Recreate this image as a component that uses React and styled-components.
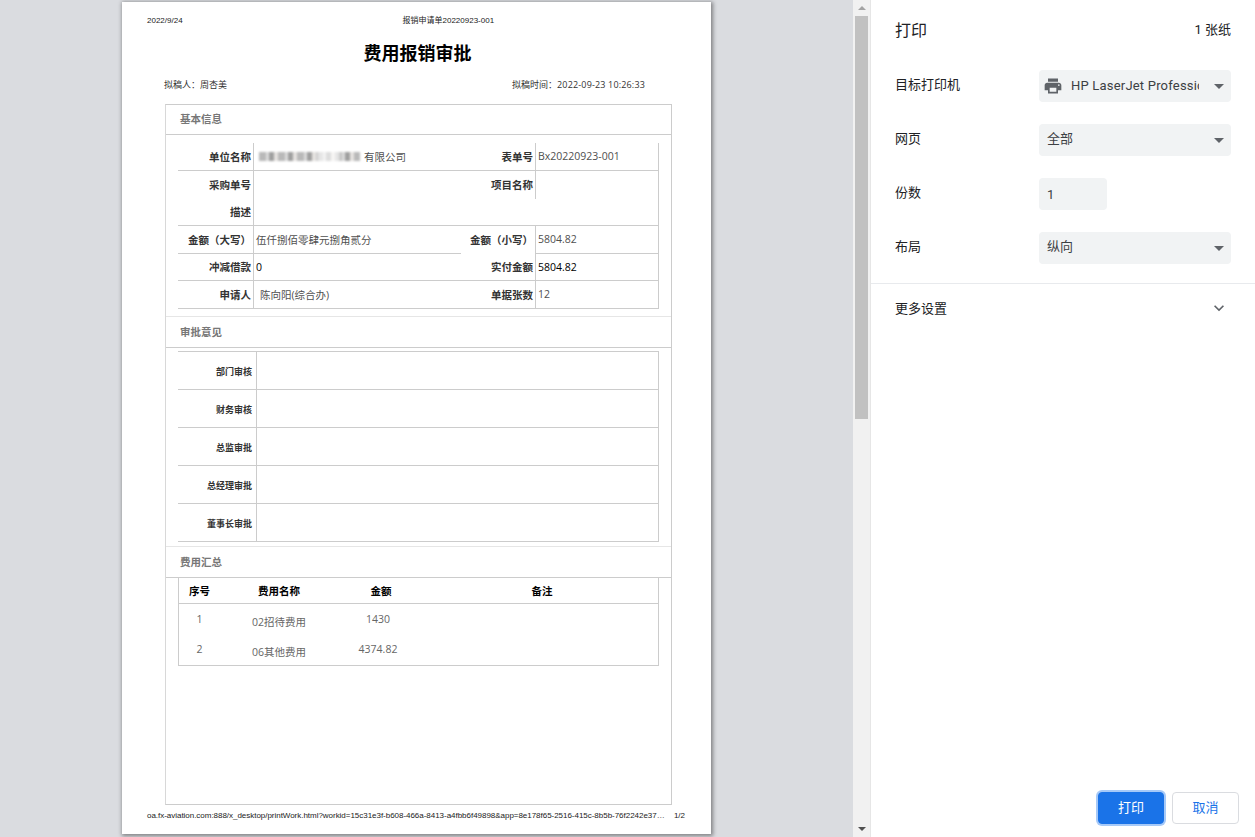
import React from "react";
import styled, { createGlobalStyle } from "styled-components";

const GlobalStyle = createGlobalStyle`
  html, body {
    margin: 0;
    height: 100%;
    overflow: hidden;
  }
  body {
    font-family: "Open Sans", "Noto Sans CJK SC", sans-serif;
  }
`;

const Layout = styled.div`
  display: flex;
  width: 1255px;
  height: 837px;
  overflow: hidden;
`;

const Preview = styled.div`
  width: 853px;
  padding: 2px 0 0 122px;
  box-sizing: border-box;
  background: #dadce0;
`;

const Page = styled.div`
  display: flex;
  flex-direction: column;
  width: 589px;
  height: 832px;
  padding-top: 13px;
  box-sizing: border-box;
  background: #fff;
  box-shadow: 1px 1px 4px 1px rgba(0, 0, 0, 0.42);
`;

const RunningHead = styled.div`
  display: flex;
  gap: 28px;
  height: 12px;
  padding: 0 25px;
  font: 8px/12px "Liberation Sans", "Noto Sans CJK SC", sans-serif;
  color: #222;
`;

const RunningTitle = styled.div`
  flex: 1;
  text-align: center;
`;

const Title = styled.h1`
  margin: 13px 0 0;
  padding-left: 2px;
  font-size: 18px;
  line-height: 26px;
  font-weight: 700;
  text-align: center;
  color: #000;
`;

const Meta = styled.div`
  display: flex;
  justify-content: space-between;
  margin-top: 13px;
  padding: 0 66px 0 42px;
  font-size: 9px;
  line-height: 12px;
  color: #333;
`;

const MetaValue = styled.span`
  letter-spacing: 0.16px;
`;

const FormBox = styled.div`
  flex: 1;
  margin: 13px 39px 0 43px;
  border: 1px solid #ccc;
  border-left-color: #d8d8d8;
  background: #fff;
`;

const SectionHead = styled.div`
  height: ${(p) => (p.$first ? 30 : 32)}px;
  box-sizing: border-box;
  padding-left: 14px;
  border-top: ${(p) => (p.$first ? "none" : "1px solid #e6e6e6")};
  border-bottom: 1px solid #ccc;
  font-size: 10.5px;
  line-height: ${(p) => (p.$first ? 29 : 31)}px;
  font-weight: 700;
  color: #777;
`;

const InfoGrid = styled.div`
  display: grid;
  grid-template-columns: 76px 207px 75px 123px;
  grid-template-rows: 28px 28px 27px 28px 27px 28px;
  margin: 8px 0 7px 12px;
  width: 481px;
`;

const Cell = styled.div`
  display: flex;
  align-items: center;
  box-sizing: border-box;
  padding-bottom: 1px;
  font-size: 10.5px;
  white-space: nowrap;
  border-bottom: ${(p) => (p.$line ? "1px solid #ccc" : "none")};
  border-right: ${(p) => (p.$rule ? "1px solid #ccc" : "none")};
`;

const LabelCell = styled(Cell)`
  justify-content: flex-end;
  padding-right: 2px;
  font-weight: 700;
  color: #333;
`;

const ValueCell = styled(Cell)`
  padding-left: ${(p) => p.$indent || 2}px;
  font-weight: ${(p) => (p.$strong ? 500 : 400)};
  color: ${(p) => (p.$strong ? "#000" : "#4f4f4f")};
`;

const Blurred = styled.span`
  display: inline-block;
  width: 101px;
  height: 9px;
  margin-right: 4px;
  filter: blur(1.2px);
  background:
    linear-gradient(90deg, transparent 0 55%, rgba(255, 255, 255, 0.65) 60% 78%, transparent 82%),
    repeating-linear-gradient(
      90deg,
      #b9b9b9 0 7px,
      #dcdcdc 7px 10px,
      #9f9f9f 10px 15px,
      #e6e3e0 15px 19px
    );
`;

const ApprovalTable = styled.div`
  margin: 3px 0 4px 12px;
  width: 481px;
  border-top: 1px solid #ccc;
  border-right: 1px solid #ccc;
  box-sizing: border-box;
`;

const ApprovalRow = styled.div`
  display: grid;
  grid-template-columns: 79px 1fr;
  height: 38px;
  box-sizing: border-box;
  border-bottom: 1px solid #ccc;
`;

const ApprovalLabel = styled.div`
  display: flex;
  align-items: center;
  justify-content: flex-end;
  padding: 1px 4px 0 0;
  border-right: 1px solid #ccc;
  font-size: 9px;
  font-weight: 700;
  color: #333;
`;

const CostTable = styled.div`
  margin-left: 12px;
  width: 481px;
  box-sizing: border-box;
  border: 1px solid #ccc;
  border-top: none;
`;

const CostRow = styled.div`
  display: grid;
  grid-template-columns: 41px 118px 86px 1fr;
  height: ${(p) => (p.$head ? 26 : 30)}px;
  box-sizing: border-box;
  align-items: center;
  text-align: center;
  font-size: 10.5px;
  font-weight: ${(p) => (p.$head ? 700 : 400)};
  color: ${(p) => (p.$head ? "#000" : "#666")};
  border-bottom: ${(p) => (p.$head ? "1px solid #ccc" : "none")};
`;

const CostName = styled.div`
  padding-top: 4px;
`;

const CostAmount = styled.div`
  padding-right: 6px;
`;

const CostRemark = styled.div`
  padding-left: 2px;
`;

const CostBody = styled.div`
  padding-bottom: 1px;
`;

const RunningFoot = styled.div`
  display: flex;
  justify-content: space-between;
  margin-top: 5px;
  padding: 0 26px 12px 25px;
  font: 8px/12px "Liberation Sans", sans-serif;
  color: #222;
  white-space: nowrap;
`;

const FootUrl = styled.div`
  letter-spacing: -0.03px;
`;

const Scrollbar = styled.div`
  display: flex;
  flex-direction: column;
  align-items: center;
  width: 18px;
  background: #f1f1f1;
  border-right: 1px solid #e6e6e6;
  box-sizing: border-box;
`;

const ScrollArrow = styled.div`
  display: flex;
  align-items: center;
  justify-content: center;
  height: 16px;
  flex: none;
  &::before {
    content: "";
    border-left: 4px solid transparent;
    border-right: 4px solid transparent;
    ${(p) => (p.$down ? "border-top: 4px solid #505050;" : "border-bottom: 4px solid #a3a3a3;")}
  }
`;

const ScrollThumb = styled.div`
  width: 13px;
  height: 403px;
  background: #c1c1c1;
`;

const ScrollSpace = styled.div`
  flex: 1;
`;

const Sidebar = styled.aside`
  display: flex;
  flex-direction: column;
  width: 384px;
  background: #fff;
  font-family: Roboto, "Noto Sans CJK SC", sans-serif;
  font-size: 13px;
  color: #202124;
`;

const SideHead = styled.div`
  display: flex;
  align-items: center;
  justify-content: space-between;
  height: 60px;
  padding: 0 24px 2px;
  box-sizing: border-box;
`;

const SideTitle = styled.h2`
  margin: 0;
  font-size: 16px;
  font-weight: 400;
`;

const SheetCount = styled.div`
  padding-bottom: 2px;
`;

const Settings = styled.div`
  padding-bottom: 8px;
  margin-top: -1px;
  border-bottom: 1px solid #e8eaed;
`;

const SettingRow = styled.div`
  display: grid;
  grid-template-columns: 144px 192px;
  align-items: center;
  height: 54px;
  padding-left: 24px;
`;

const SettingLabel = styled.div`
  padding-bottom: 5px;
`;

const Field = styled.div`
  display: flex;
  align-items: center;
  height: 32px;
  width: ${(p) => p.$w || 192}px;
  box-sizing: border-box;
  padding-left: ${(p) => (p.$icon ? 4 : 8)}px;
  background: #f1f3f4;
  border-radius: 4px;
  color: #3c4043;
`;

const FieldText = styled.div`
  flex: 1;
  padding-bottom: ${(p) => (p.$cjk ? 5 : 0)}px;
  white-space: nowrap;
`;

// printer name is clipped by the select, same as the real dialog
const PrinterName = styled.div`
  width: 128px;
  margin: 0 0 2px 8px;
  overflow: hidden;
  white-space: nowrap;
  letter-spacing: 0.2px;
`;

const Caret = styled.div`
  margin: 1px 7px 0 auto;
  border-left: 5px solid transparent;
  border-right: 5px solid transparent;
  border-top: 5px solid #5f6368;
`;

const MoreRow = styled.div`
  display: flex;
  align-items: center;
  justify-content: space-between;
  height: 50px;
  padding: 0 24px;
  font-size: 13px;
`;

const MoreLabel = styled.div`
  padding-bottom: 4px;
`;

const ChevronSvg = styled.svg`
  margin: 0 2px 2px 0;
`;

const Footer = styled.div`
  display: flex;
  justify-content: flex-end;
  gap: 8px;
  margin-top: auto;
  padding: 0 16px 13px 0;
  align-items: center;
`;

const Button = styled.button`
  height: 32px;
  width: ${(p) => (p.$primary ? 66 : 67)}px;
  padding: 0 0 3px;
  border-radius: 4px;
  border: 1px solid ${(p) => (p.$primary ? "#1a73e8" : "#dadce0")};
  background: ${(p) => (p.$primary ? "#1a73e8" : "#fff")};
  color: ${(p) => (p.$primary ? "#fff" : "#1a73e8")};
  box-shadow: ${(p) => (p.$primary ? "0 0 0 2px #a6c9f8" : "none")};
  font-family: inherit;
  font-size: 13px;
  font-weight: 400;
`;

const PrinterIcon = () => (
  <svg width="20" height="20" viewBox="0 0 24 24" fill="#5f6368">
    <path d="M19 8H5c-1.66 0-3 1.34-3 3v6h4v4h12v-4h4v-6c0-1.66-1.34-3-3-3zm-3 11H8v-5h8v5zm3-7c-.55 0-1-.45-1-1s.45-1 1-1 1 .45 1 1-.45 1-1 1zm-1-9H6v4h12V3z" />
  </svg>
);

const ChevronIcon = () => (
  <ChevronSvg width="20" height="20" viewBox="0 0 24 24" fill="#5f6368">
    <path d="M7.41 8.59L12 13.17l4.59-4.58L18 10l-6 6-6-6 1.41-1.41z" />
  </ChevronSvg>
);

const approvals = ["部门审核", "财务审核", "总监审批", "总经理审批", "董事长审批"];

const costs = [
  { no: 1, name: "02招待费用", amount: "1430" },
  { no: 2, name: "06其他费用", amount: "4374.82" },
];

const settings = [
  { label: "网页", value: "全部", select: true },
  { label: "份数", value: "1", width: 68 },
  { label: "布局", value: "纵向", select: true },
];

const App = () => (
  <Layout>
    <GlobalStyle />
    <Preview>
      <Page>
        <RunningHead>
          <div>2022/9/24</div>
          <RunningTitle>报销申请单20220923-001</RunningTitle>
        </RunningHead>
        <Title>费用报销审批</Title>
        <Meta>
          <div>拟稿人：周杏美</div>
          <div>拟稿时间：<MetaValue>2022-09-23 10:26:33</MetaValue></div>
        </Meta>
        <FormBox>
          <SectionHead $first>基本信息</SectionHead>
          <InfoGrid>
            <LabelCell $line $rule>单位名称</LabelCell>
            <ValueCell $line $indent={5}><Blurred />有限公司</ValueCell>
            <LabelCell $line $rule>表单号</LabelCell>
            <ValueCell $line $rule>Bx20220923-001</ValueCell>

            <LabelCell $rule>采购单号</LabelCell>
            <ValueCell />
            <LabelCell $rule>项目名称</LabelCell>
            <ValueCell $rule />

            <LabelCell $line $rule>描述</LabelCell>
            <ValueCell $line />
            <LabelCell $line />
            <ValueCell $line $rule />

            <LabelCell $line $rule>金额（大写）</LabelCell>
            <ValueCell $line>伍仟捌佰零肆元捌角贰分</ValueCell>
            <LabelCell $rule>金额（小写）</LabelCell>
            <ValueCell $line $rule>5804.82</ValueCell>

            <LabelCell $line $rule>冲减借款</LabelCell>
            <ValueCell $line $strong>0</ValueCell>
            <LabelCell $line $rule>实付金额</LabelCell>
            <ValueCell $line $rule $strong>5804.82</ValueCell>

            <LabelCell $line $rule>申请人</LabelCell>
            <ValueCell $line $indent={6}>陈向阳(综合办)</ValueCell>
            <LabelCell $line $rule>单据张数</LabelCell>
            <ValueCell $line $rule>12</ValueCell>
          </InfoGrid>

          <SectionHead>审批意见</SectionHead>
          <ApprovalTable>
            {approvals.map((label) => (
              <ApprovalRow key={label}>
                <ApprovalLabel>{label}</ApprovalLabel>
                <div />
              </ApprovalRow>
            ))}
          </ApprovalTable>

          <SectionHead>费用汇总</SectionHead>
          <CostTable>
            <CostRow $head>
              <div>序号</div>
              <div>费用名称</div>
              <div>金额</div>
              <CostRemark>备注</CostRemark>
            </CostRow>
            <CostBody>
              {costs.map((c) => (
                <CostRow key={c.no}>
                  <div>{c.no}</div>
                  <CostName>{c.name}</CostName>
                  <CostAmount>{c.amount}</CostAmount>
                  <div />
                </CostRow>
              ))}
            </CostBody>
          </CostTable>
        </FormBox>
        <RunningFoot>
          <FootUrl>oa.fx-aviation.com:888/x_desktop/printWork.html?workid=15c31e3f-b608-466a-8413-a4fbb6f49898&amp;app=8e178f65-2516-415c-8b5b-76f2242e37…</FootUrl>
          <div>1/2</div>
        </RunningFoot>
      </Page>
    </Preview>

    <Scrollbar>
      <ScrollArrow />
      <ScrollThumb />
      <ScrollSpace />
      <ScrollArrow $down />
    </Scrollbar>

    <Sidebar>
      <SideHead>
        <SideTitle>打印</SideTitle>
        <SheetCount>1 张纸</SheetCount>
      </SideHead>
      <Settings>
        <SettingRow>
          <SettingLabel>目标打印机</SettingLabel>
          <Field $icon>
            <PrinterIcon />
            <PrinterName>HP LaserJet Professional</PrinterName>
            <Caret />
          </Field>
        </SettingRow>
        {settings.map((s) => (
          <SettingRow key={s.label}>
            <SettingLabel>{s.label}</SettingLabel>
            <Field $w={s.width}>
              <FieldText $cjk={s.select}>{s.value}</FieldText>
              {s.select && <Caret />}
            </Field>
          </SettingRow>
        ))}
      </Settings>
      <MoreRow>
        <MoreLabel>更多设置</MoreLabel>
        <ChevronIcon />
      </MoreRow>
      <Footer>
        <Button $primary>打印</Button>
        <Button>取消</Button>
      </Footer>
    </Sidebar>
  </Layout>
);

export default App;
